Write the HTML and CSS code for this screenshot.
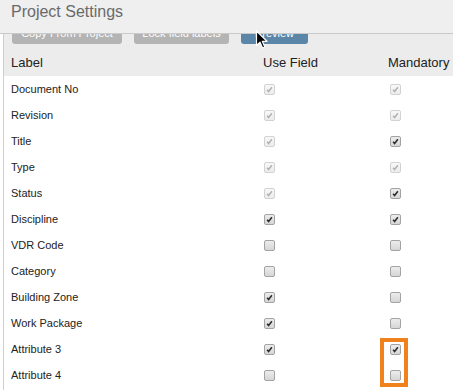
FILE: index.html
```html
<!DOCTYPE html>
<html lang="en">
<head>
    <meta charset="UTF-8">
    <meta name="viewport" content="width=device-width, initial-scale=1.0">
    <title>Project Settings</title>
    <link rel="stylesheet" href="styles.css">
</head>
<body>

    <!-- Header -->
    <div class="header">
        <h1>Project Settings</h1>
    </div>

    <div class="panel">
        <!-- Toolbar (scrolled under header) -->
        <div class="toolbar">
            <div class="toolbar-inner">
                <span class="btn btn-grey btn-copy">Copy From Project</span>
                <span class="btn btn-grey btn-lock">Lock field labels</span>
                <span class="btn btn-blue btn-preview">Preview</span>
            </div>
        </div>

        <!-- Fields -->
        <div class="fields">
            <div class="cell head">Label</div>
            <div class="cell head">Use Field</div>
            <div class="cell head">Mandatory</div>

            <div class="cell">Document No</div>
            <div class="cell"><span class="cb off on"><svg viewBox="0 0 11 11"><path d="M2.6 5.8 L4.4 7.9 L8.4 2.8"/></svg></span></div>
            <div class="cell"><span class="cb off on"><svg viewBox="0 0 11 11"><path d="M2.6 5.8 L4.4 7.9 L8.4 2.8"/></svg></span></div>

            <div class="cell">Revision</div>
            <div class="cell"><span class="cb off on"><svg viewBox="0 0 11 11"><path d="M2.6 5.8 L4.4 7.9 L8.4 2.8"/></svg></span></div>
            <div class="cell"><span class="cb off on"><svg viewBox="0 0 11 11"><path d="M2.6 5.8 L4.4 7.9 L8.4 2.8"/></svg></span></div>

            <div class="cell">Title</div>
            <div class="cell"><span class="cb off on"><svg viewBox="0 0 11 11"><path d="M2.6 5.8 L4.4 7.9 L8.4 2.8"/></svg></span></div>
            <div class="cell"><span class="cb on"><svg viewBox="0 0 11 11"><path d="M2.6 5.8 L4.4 7.9 L8.4 2.8"/></svg></span></div>

            <div class="cell">Type</div>
            <div class="cell"><span class="cb off on"><svg viewBox="0 0 11 11"><path d="M2.6 5.8 L4.4 7.9 L8.4 2.8"/></svg></span></div>
            <div class="cell"><span class="cb off on"><svg viewBox="0 0 11 11"><path d="M2.6 5.8 L4.4 7.9 L8.4 2.8"/></svg></span></div>

            <div class="cell">Status</div>
            <div class="cell"><span class="cb off on"><svg viewBox="0 0 11 11"><path d="M2.6 5.8 L4.4 7.9 L8.4 2.8"/></svg></span></div>
            <div class="cell"><span class="cb on"><svg viewBox="0 0 11 11"><path d="M2.6 5.8 L4.4 7.9 L8.4 2.8"/></svg></span></div>

            <div class="cell">Discipline</div>
            <div class="cell"><span class="cb on"><svg viewBox="0 0 11 11"><path d="M2.6 5.8 L4.4 7.9 L8.4 2.8"/></svg></span></div>
            <div class="cell"><span class="cb on"><svg viewBox="0 0 11 11"><path d="M2.6 5.8 L4.4 7.9 L8.4 2.8"/></svg></span></div>

            <div class="cell">VDR Code</div>
            <div class="cell"><span class="cb"></span></div>
            <div class="cell"><span class="cb"></span></div>

            <div class="cell">Category</div>
            <div class="cell"><span class="cb"></span></div>
            <div class="cell"><span class="cb"></span></div>

            <div class="cell">Building Zone</div>
            <div class="cell"><span class="cb on"><svg viewBox="0 0 11 11"><path d="M2.6 5.8 L4.4 7.9 L8.4 2.8"/></svg></span></div>
            <div class="cell"><span class="cb"></span></div>

            <div class="cell">Work Package</div>
            <div class="cell"><span class="cb on"><svg viewBox="0 0 11 11"><path d="M2.6 5.8 L4.4 7.9 L8.4 2.8"/></svg></span></div>
            <div class="cell"><span class="cb"></span></div>

            <div class="cell">Attribute 3</div>
            <div class="cell"><span class="cb on"><svg viewBox="0 0 11 11"><path d="M2.6 5.8 L4.4 7.9 L8.4 2.8"/></svg></span></div>
            <div class="cell"><span class="cb on"><svg viewBox="0 0 11 11"><path d="M2.6 5.8 L4.4 7.9 L8.4 2.8"/></svg></span></div>

            <div class="cell">Attribute 4</div>
            <div class="cell"><span class="cb"></span></div>
            <div class="cell"><span class="cb"></span></div>
        </div>
    </div>

    <!-- Highlight -->
    <div class="highlight"></div>

    <!-- Mouse cursor -->
    <svg class="cursor" width="14" height="20" viewBox="0 0 14 20">
        <path d="M1.5 1 L1.5 15.5 L5 12.2 L7.6 18 L9.8 17 L7.3 11.3 L12 11.3 Z" fill="#000" stroke="#fff" stroke-width="1.2" stroke-linejoin="round"/>
    </svg>

</body>
</html>
```

FILE: styles.css
```css
* {
    margin: 0;
    padding: 0;
    box-sizing: border-box;
    font-family: 'Liberation Sans', Arial, sans-serif;
}
body {
    width: 453px;
    height: 390px;
    overflow: hidden;
    background: #fff;
    position: relative;
}

/* Header */
.header {
    height: 34px;
    background: #efefef;
    border-bottom: 1px solid #c9c9c9;
}
.header h1 {
    font-size: 16px;
    font-weight: normal;
    line-height: 24px;
    color: #6a6a6a;
    padding-left: 11px;
}

/* Panel */
.panel {
    margin-left: 3px;
    border-left: 1px solid #cfcfcf;
    height: 356px;
}

/* Toolbar */
.toolbar {
    height: 10px;
    overflow: hidden;
    background: #ececec;
}
.toolbar-inner {
    display: flex;
    gap: 12px;
    padding-left: 8px;
    margin-top: -12px;
}
.btn {
    display: block;
    height: 22px;
    line-height: 22px;
    font-size: 11px;
    color: #fff;
    text-align: center;
    border-radius: 3px;
}
.btn-grey { background: #b4b4b4; }
.btn-blue { background: #5c86a7; }
.btn-copy { width: 110px; }
.btn-lock { width: 95px; }
.btn-preview { width: 67px; }

/* Fields */
.fields {
    display: grid;
    grid-template-columns: 252px 125px 1fr;
    grid-auto-rows: 26px;
}
.cell {
    display: flex;
    align-items: center;
    padding-left: 7px;
    font-size: 11px;
    color: #222;
}
.cell.head {
    height: 32px;
    padding-top: 4px;
    font-size: 13px;
    color: #222;
    background: #ececec;
}
.fields .cell:nth-child(-n+3) {
    align-self: start;
}
.fields {
    grid-template-rows: 32px;
}
.cell:nth-child(3n+2) .cb { margin-left: 1px; }
.cell:nth-child(3n) .cb { margin-left: 2px; }

/* Checkbox */
.cb {
    display: block;
    width: 11px;
    height: 11px;
    border: 1px solid #a3a3a3;
    border-radius: 2px;
    background: linear-gradient(#ececec, #d6d6d6);
    box-shadow: 0 1px 0 rgba(255, 255, 255, 0.8);
}
.cb svg {
    display: block;
    width: 9px;
    height: 9px;
}
.cb svg path {
    fill: none;
    stroke: #2b2b2b;
    stroke-width: 1.9;
}
.cb.off {
    border-color: #d2d2d2;
    background: linear-gradient(#f8f8f8, #ececec);
}
.cb.off svg path {
    stroke: #b2b2b2;
}

/* Highlight */
.highlight {
    position: absolute;
    left: 380px;
    top: 338px;
    width: 28px;
    height: 49px;
    border: 4px solid #f0821e;
}

/* Cursor */
.cursor {
    position: absolute;
    left: 255px;
    top: 30px;
}
```
